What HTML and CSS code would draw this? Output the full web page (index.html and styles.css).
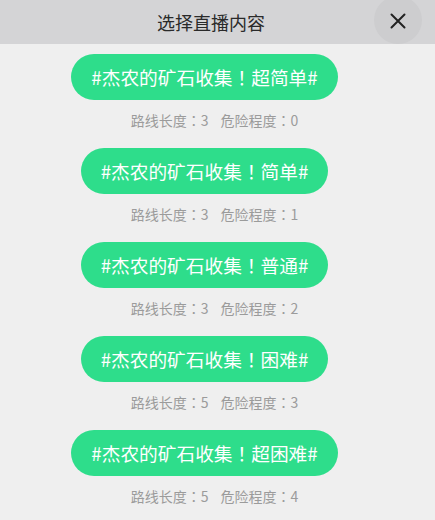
FILE: index.html
```html
<!DOCTYPE html>
<html lang="zh">
<head>
<meta charset="utf-8">
<link rel="stylesheet" href="styles.css">
</head>
<body>
<div class="header">
  <div class="title">选择直播内容</div>
  <div class="close">
    <svg width="16" height="16" viewBox="0 0 16 16"><path d="M1.5 1.5 L14.5 14.5 M14.5 1.5 L1.5 14.5" stroke="#222" stroke-width="2" stroke-linecap="round" fill="none"/></svg>
  </div>
</div>
<div class="list">
  <div class="item">
    <div class="btn">#杰农的矿石收集<span class="p" lang="zh-Hant">！</span>超简单#</div>
    <div class="info"><span>路线长度<span class="p" lang="zh-Hant">：</span>3</span><span>危险程度<span class="p" lang="zh-Hant">：</span>0</span></div>
  </div>
  <div class="item">
    <div class="btn">#杰农的矿石收集<span class="p" lang="zh-Hant">！</span>简单#</div>
    <div class="info"><span>路线长度<span class="p" lang="zh-Hant">：</span>3</span><span>危险程度<span class="p" lang="zh-Hant">：</span>1</span></div>
  </div>
  <div class="item">
    <div class="btn">#杰农的矿石收集<span class="p" lang="zh-Hant">！</span>普通#</div>
    <div class="info"><span>路线长度<span class="p" lang="zh-Hant">：</span>3</span><span>危险程度<span class="p" lang="zh-Hant">：</span>2</span></div>
  </div>
  <div class="item">
    <div class="btn">#杰农的矿石收集<span class="p" lang="zh-Hant">！</span>困难#</div>
    <div class="info"><span>路线长度<span class="p" lang="zh-Hant">：</span>5</span><span>危险程度<span class="p" lang="zh-Hant">：</span>3</span></div>
  </div>
  <div class="item">
    <div class="btn">#杰农的矿石收集<span class="p" lang="zh-Hant">！</span>超困难#</div>
    <div class="info"><span>路线长度<span class="p" lang="zh-Hant">：</span>5</span><span>危险程度<span class="p" lang="zh-Hant">：</span>4</span></div>
  </div>
</div>
</body>
</html>
```

FILE: styles.css
```css
* { box-sizing: border-box; }
html, body {
  margin: 0;
  padding: 0;
  background: #efefef;
  font-family: "Noto Sans CJK SC", "Noto Sans", sans-serif;
}
body {
  width: 435px;
  height: 520px;
  overflow: hidden;
}
.p {
  font-family: "Noto Sans CJK TC", "Noto Sans CJK JP", sans-serif;
}
.header {
  position: relative;
  height: 44px;
  background: #d4d4d6;
  display: flex;
  align-items: center;
  justify-content: center;
  padding-right: 13px;
}
.title {
  font-size: 18px;
  color: #2a2a2a;
  line-height: 44px;
}
.close {
  position: absolute;
  left: 374px;
  top: -4px;
  width: 48px;
  height: 48px;
  border-radius: 50%;
  background: #cdcdcf;
  display: flex;
  align-items: center;
  justify-content: center;
  padding-top: 1px;
}
.list {
  display: flex;
  flex-direction: column;
  padding-top: 10px;
}
.item {
  display: flex;
  flex-direction: column;
  align-items: center;
  height: 94px;
}
.btn {
  height: 46px;
  padding: 0 20px;
  border-radius: 23px;
  background: #2edd8b;
  color: #fff;
  font-size: 18.7px;
  line-height: 46px;
  margin-right: 26px;
  white-space: nowrap;
}
.info {
  margin-top: 10px;
  line-height: 20px;
  font-size: 14px;
  color: #9b9b9b;
  display: flex;
  gap: 12px;
  margin-right: 6px;
}
```
